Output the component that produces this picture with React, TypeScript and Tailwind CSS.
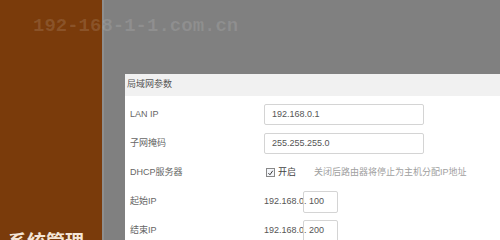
export default function App() {
  const rows = [
    { label: "LAN IP", kind: "input", value: "192.168.0.1" },
    { label: "子网掩码", kind: "input", value: "255.255.255.0" },
    { label: "DHCP服务器", kind: "check" },
    { label: "起始IP", kind: "range", value: "100" },
    { label: "结束IP", kind: "range", value: "200" },
  ];

  return (
    <div className="relative flex h-[240px] w-[500px] overflow-hidden font-['Liberation_Sans','Noto_Sans_CJK_SC',sans-serif]">
      {/* left sidebar */}
      <div className="flex w-[102px] shrink-0 flex-col justify-end bg-[#7a3b0b]">
        <div className="translate-y-[12px] pl-[8px] text-[19px] font-bold leading-none text-[#f4e6d8]">
          系统管理
        </div>
      </div>

      {/* main */}
      <div className="flex flex-1 flex-col border-l-2 border-[#8e8e8e] bg-[#808080] pl-[21px] pt-[74px]">
        <div className="flex flex-1 flex-col bg-white text-[9px] text-[#666]">
          <div className="flex h-[22px] items-center bg-[#f1f1f1] pl-[2px] text-[#555]">局域网参数</div>
          <div className="flex flex-col pt-[4px]">
            {rows.map((r) => (
              <div key={r.label} className="flex h-[29px] items-center">
                <div className="w-[139px] shrink-0 pl-[5px]">{r.label}</div>
                {r.kind === "input" && (
                  <div className="flex h-[21px] w-[160px] items-center rounded-[2px] border border-[#d4d4d4] pl-[7px] text-[#555]">
                    {r.value}
                  </div>
                )}
                {r.kind === "check" && (
                  <div className="flex items-center">
                    <div className="ml-[2px] flex h-[9px] w-[9px] items-center justify-center border border-[#888] bg-[#f4f6fa]">
                      <svg viewBox="0 0 10 10" className="h-[8px] w-[8px]">
                        <path d="M2 5.2 L4.2 7.5 L8.2 1.8" fill="none" stroke="#333" strokeWidth="1.4" />
                      </svg>
                    </div>
                    <span className="ml-[3px] text-[#444]">开启</span>
                    <span className="ml-[18px] text-[#a0a0a0]">关闭后路由器将停止为主机分配IP地址</span>
                  </div>
                )}
                {r.kind === "range" && (
                  <div className="flex items-center text-[#555]">
                    <span className="w-[39px]">192.168.0.</span>
                    <div className="flex h-[22px] w-[35px] items-center rounded-[2px] border border-[#d4d4d4] pl-[5px]">
                      {r.value}
                    </div>
                  </div>
                )}
              </div>
            ))}
          </div>
        </div>
      </div>

      {/* watermark */}
      <div className="pointer-events-none absolute left-[33px] top-[15px] font-['Liberation_Mono',monospace] text-[19px] font-bold leading-[22px] text-white/[0.12]">
        192-168-1-1.com.cn
      </div>
    </div>
  );
}
